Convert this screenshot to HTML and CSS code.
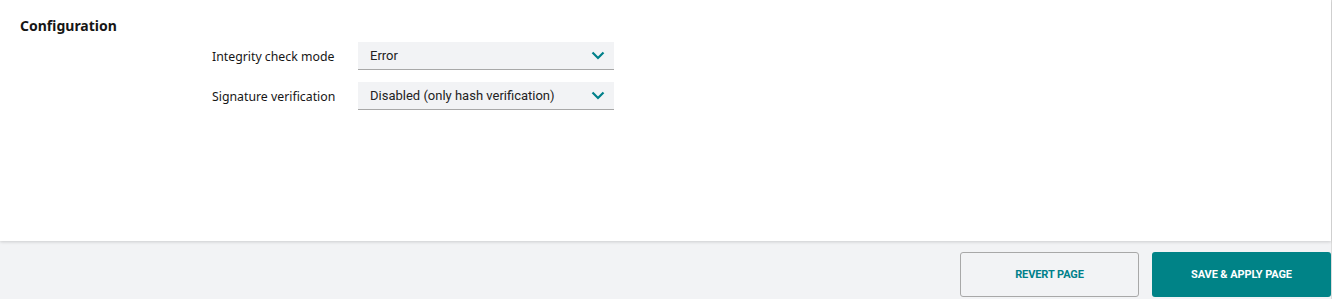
FILE: index.html
```html
<!DOCTYPE html>
<html lang="en">
<head>
    <meta charset="UTF-8">
    <title>Configuration</title>
    <link rel="stylesheet" href="styles.css">
</head>
<body>
    <div class="page">
        <div class="panel">
            <div class="section-title">Configuration</div>
            <div class="form">
                <label class="field-label">Integrity check mode</label>
                <div class="select">
                    <span>Error</span>
                    <svg class="chevron" width="14" height="9" viewBox="0 0 14 9"><path d="M1.5 1.5 L7 7 L12.5 1.5" fill="none" stroke="#00808a" stroke-width="2.2"/></svg>
                </div>
                <label class="field-label">Signature verification</label>
                <div class="select">
                    <span>Disabled (only hash verification)</span>
                    <svg class="chevron" width="14" height="9" viewBox="0 0 14 9"><path d="M1.5 1.5 L7 7 L12.5 1.5" fill="none" stroke="#00808a" stroke-width="2.2"/></svg>
                </div>
            </div>
        </div>
        <div class="footer">
            <button class="btn btn-secondary">REVERT PAGE</button>
            <button class="btn btn-primary">SAVE &amp; APPLY PAGE</button>
        </div>
    </div>
</body>
</html>
```

FILE: styles.css
```css
/* page frame */
body {
    margin: 0;
    font-family: 'Noto Sans', sans-serif;
    color: #161616;
    background: #f2f3f5;
}

.page {
    width: 1331px;
    height: 299px;
    border-right: 1px solid #dcdcdc;
    display: flex;
    flex-direction: column;
}

.panel {
    height: 241px;
    background: #fff;
    box-shadow: 0 1px 3px rgba(0, 0, 0, 0.16);
    position: relative;
    z-index: 1;
}

.section-title {
    font-size: 14px;
    font-weight: bold;
    padding: 16px 0 0 20px;
    line-height: 20px;
}

.form {
    display: grid;
    grid-template-columns: 146px 256px;
    row-gap: 12px;
    margin: 6px 0 0 212px;
    align-items: center;
}

.field-label {
    font-size: 12.3px;
}

.select {
    height: 27px;
    background: #f2f3f5;
    border-bottom: 1px solid #a8a8a8;
    display: flex;
    align-items: center;
    justify-content: space-between;
    padding: 0 9px 0 12px;
    font-family: 'Roboto', sans-serif;
    font-size: 13px;
    color: #222;
}

.chevron {
    display: block;
}

/* bottom bar */
.footer {
    flex: 1;
    display: flex;
    justify-content: flex-end;
    align-items: flex-start;
    gap: 13px;
    padding-top: 11px;
}

.btn {
    width: 179px;
    height: 45px;
    border-radius: 3px;
    font-family: 'Roboto', sans-serif;
    font-weight: bold;
    font-size: 11px;
    letter-spacing: -0.1px;
    cursor: pointer;
}

.btn-secondary {
    background: #f2f3f5;
    border: 1px solid #a8a8a8;
    color: #00808a;
}

.btn-primary {
    background: #008387;
    border: none;
    color: #fff;
}
```
